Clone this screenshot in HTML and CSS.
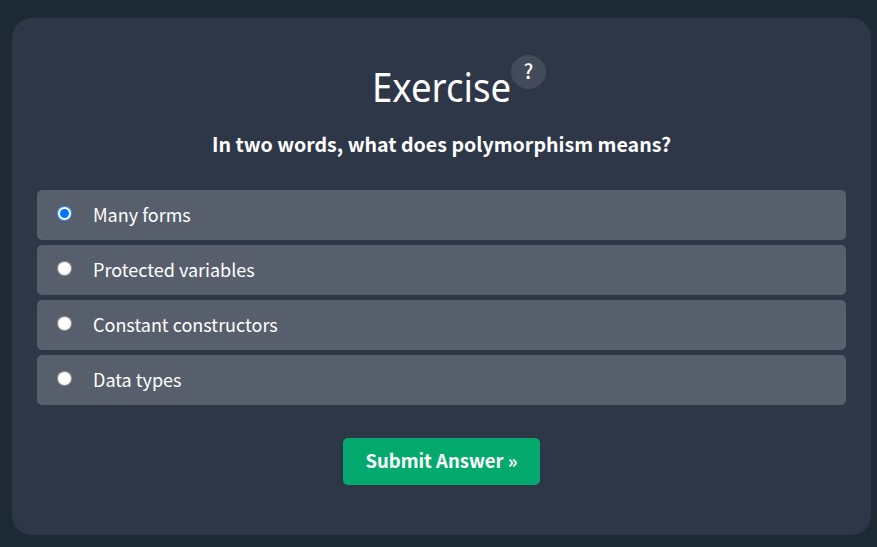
FILE: index.html
```html
<!DOCTYPE html>
<html lang="en">
<head>
<meta charset="utf-8">
<title>Exercise</title>
<link rel="stylesheet" href="styles.css">
</head>
<body>
<main class="card">
  <h2 class="title"><span class="title-text">Exercise</span><span class="help">?</span></h2>
  <p class="question">In two words, what does polymorphism means?</p>
  <form class="options">
    <label class="option"><input class="radio" type="radio" name="answer" checked><span>Many forms</span></label>
    <label class="option"><input class="radio" type="radio" name="answer"><span>Protected variables</span></label>
    <label class="option"><input class="radio" type="radio" name="answer"><span>Constant constructors</span></label>
    <label class="option"><input class="radio" type="radio" name="answer"><span>Data types</span></label>
  </form>
  <button class="submit" type="button">Submit Answer »</button>
</main>
</body>
</html>
```
FILE: styles.css
```css
* { box-sizing: border-box; }
body { margin: 0; height: 547px; overflow: hidden; background: #1d2a35; color: #fff; font-family: "Source Sans Pro", "Noto Sans CJK SC", "Noto Sans", sans-serif; }
.card { margin: 18px 6px 0 12px; height: 517px; padding: 37px 25px 0; border-radius: 20px; background: #2e3748; display: flex; flex-direction: column; align-items: center; }
.title { position: relative; margin: 0; width: 139px; height: 64px; padding-top: 4px; font: 400 40px/56px "Noto Sans", sans-serif; }
.title-text { display: inline-block; transform: scaleX(0.915); transform-origin: left; }
.help { position: absolute; left: 139px; top: 0; width: 35px; height: 34px; border-radius: 50%; background: #434b5a; font: 500 20px/32px "Noto Sans CJK SC", sans-serif; text-align: center; }
.question { margin: 7px 0 0; height: 36px; font-size: 19.6px; font-weight: 700; line-height: 36px; white-space: nowrap; }
.options { width: 100%; margin-top: 28px; display: grid; gap: 5px; }
.option { height: 50px; padding-left: 20px; border-radius: 5px; background: #585f6c; display: flex; font-size: 18px; line-height: 48px; }
.radio { width: 15px; height: 15px; margin: 16px 21px 0 0; }
.submit { margin-top: 33px; width: 197px; height: 47px; padding: 0 0 3px; border: 0; border-radius: 5px; background: #04aa6d; color: #fff; font: 700 18.5px/44px "Noto Sans CJK SC", sans-serif; white-space: nowrap; }
```
